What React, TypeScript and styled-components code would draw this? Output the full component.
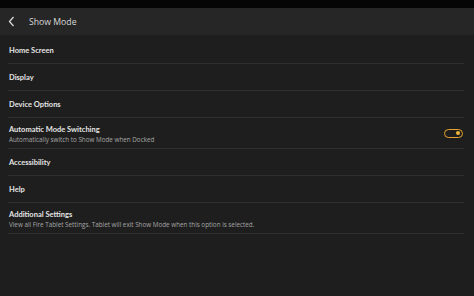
import styled, { createGlobalStyle } from "styled-components";

const Global = createGlobalStyle`
  html, body {
    margin: 0;
    padding: 0;
    background: #1e1e1e;
  }
  body {
    font-family: "Open Sans", "Liberation Sans", sans-serif;
  }
`;

const Screen = styled.div`
  width: 474px;
  height: 296px;
  background: #1e1e1e;
  display: flex;
  flex-direction: column;
  overflow: hidden;
`;

const StatusBar = styled.div`
  height: 8px;
  background: #050505;
`;

const Header = styled.div`
  height: 27px;
  background: #262626;
  display: flex;
  align-items: center;
  padding-left: 8px;
  gap: 11px;
  color: #d8d8d8;
  font-size: 8.7px;
`;

const BackButton = styled.div`
  width: 10px;
  display: flex;
  align-items: center;
`;

const List = styled.div`
  padding: 2px 10px 0 8px;
  display: flex;
  flex-direction: column;
`;

const Row = styled.div<{ $tall?: boolean }>`
  height: ${(p) => (p.$tall ? 30 : 26)}px;
  border-bottom: 1px solid #2f2f2f;
  display: flex;
  align-items: center;
  justify-content: space-between;
  padding-left: 1px;
`;

const Texts = styled.div`
  display: flex;
  flex-direction: column;
  gap: 1px;
  padding-top: 2px;
`;

const Title = styled.div`
  font-family: Lato, "Open Sans", sans-serif;
  color: #e4e4e4;
  font-size: 7.5px;
  font-weight: 700;
  line-height: 10px;
`;

const Sub = styled.div`
  color: #a6a6a6;
  font-size: 6.3px;
  line-height: 8px;
`;

const Toggle = styled.div`
  width: 15px;
  height: 7px;
  border: 1.5px solid #e3a52f;
  border-radius: 6px;
  margin-right: 1px;
  display: flex;
  align-items: center;
  justify-content: flex-end;
  padding-right: 2px;
  box-sizing: content-box;
`;

const Knob = styled.div`
  width: 4px;
  height: 4px;
  border-radius: 50%;
  background: #f0b43a;
`;

const items = [
  { title: "Home Screen" },
  { title: "Display" },
  { title: "Device Options" },
  {
    title: "Automatic Mode Switching",
    sub: "Automatically switch to Show Mode when Docked",
    toggle: true,
  },
  { title: "Accessibility" },
  { title: "Help" },
  {
    title: "Additional Settings",
    sub: "View all Fire Tablet Settings. Tablet will exit Show Mode when this option is selected.",
  },
];

export default function App() {
  return (
    <Screen>
      <Global />
      <StatusBar />
      <Header>
        <BackButton>
          <svg width="7" height="11" viewBox="0 0 7 11">
            <path d="M5.5 1 L1.5 5.5 L5.5 10" stroke="#d8d8d8" strokeWidth="1.3" fill="none" />
          </svg>
        </BackButton>
        <span>Show Mode</span>
      </Header>
      <List>
        {items.map((it) => (
          <Row key={it.title} $tall={!!it.sub}>
            <Texts>
              <Title>{it.title}</Title>
              {it.sub && <Sub>{it.sub}</Sub>}
            </Texts>
            {it.toggle && (
              <Toggle>
                <Knob />
              </Toggle>
            )}
          </Row>
        ))}
      </List>
    </Screen>
  );
}
